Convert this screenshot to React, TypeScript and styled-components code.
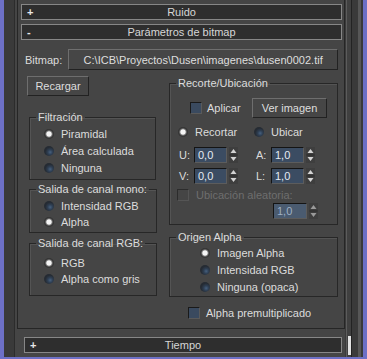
import styled, { createGlobalStyle } from "styled-components";

const GlobalStyle = createGlobalStyle`
  html, body {
    margin: 0;
    padding: 0;
    background: #6d70c6;
  }
  body {
    font-family: "Liberation Sans", Arial, sans-serif;
    font-size: 11px;
    color: #dcdcdc;
  }
`;

const Window = styled.div`
  width: 367px;
  height: 359px;
  box-sizing: border-box;
  padding: 0 4px 2px 4px;
  background: #6d70c6;
  display: flex;
`;

const Gutter = styled.div`
  width: 11px;
  background: #3a3a3a;
  border-right: 1px solid #2c2c2c;
  box-sizing: border-box;
`;

const Main = styled.div`
  width: 330px;
  background: #454545;
  padding-left: 2px;
  box-sizing: border-box;
  display: flex;
  flex-direction: column;
`;

const Frame = styled.div`
  height: 329px;
  box-sizing: border-box;
  border: 1px solid #262626;
  border-top: none;
  padding-top: 4px;
  display: flex;
  flex-direction: column;
`;

const RolloutHeader = styled.div<{ $top?: number }>`
  height: 16px;
  box-sizing: border-box;
  margin: ${(p) => p.$top ?? 0}px 2px 0 3px;
  background: #2e2e2e;
  border: 1px solid #878787;
  display: flex;
  align-items: center;
  color: #d6d6d6;
  font-size: 11px;
`;

const HeaderSign = styled.span`
  width: 18px;
  padding-left: 5px;
  box-sizing: border-box;
  font-weight: bold;
  color: #e8e8e8;
`;

const HeaderTitle = styled.span`
  flex: 1;
  text-align: center;
  padding-right: 18px;
`;

const Body = styled.div`
  flex: 1;
  padding: 9px 6px 0 7px;
  display: flex;
  flex-direction: column;
`;

const BitmapRow = styled.div`
  display: flex;
  align-items: center;
  gap: 6px;
`;

const Button = styled.div<{ $width?: number; $height?: number; $push?: boolean }>`
  width: ${(p) => (p.$width ? `${p.$width}px` : "auto")};
  flex: ${(p) => (p.$width ? "none" : 1)};
  height: ${(p) => p.$height ?? 20}px;
  margin-left: ${(p) => (p.$push ? "auto" : "0")};
  box-sizing: border-box;
  background: #464646;
  border-top: 1px solid #6e6e6e;
  border-left: 1px solid #6e6e6e;
  border-right: 1px solid #222;
  border-bottom: 1px solid #222;
  display: flex;
  align-items: center;
  justify-content: center;
  color: #dedede;
  white-space: nowrap;
`;

const Columns = styled.div`
  display: flex;
  margin-top: 6px;
  gap: 12px;
`;

const LeftColumn = styled.div`
  width: 130px;
  margin-left: 2px;
  display: flex;
  flex-direction: column;
`;

const RightColumn = styled.div`
  flex: 1;
  display: flex;
  flex-direction: column;
  padding-top: 1px;
`;

const Group = styled.fieldset<{
  $top?: number;
  $left?: number;
  $pt?: number;
  $pb?: number;
  $width?: number;
}>`
  margin: ${(p) => p.$top ?? 0}px 0 0 ${(p) => p.$left ?? 0}px;
  padding: ${(p) => p.$pt ?? 0}px 0 ${(p) => p.$pb ?? 0}px 0;
  width: ${(p) => (p.$width ? `${p.$width}px` : "auto")};
  box-sizing: border-box;
  border: 1px solid #272727;
  box-shadow: 1px 1px 0 #545454 inset;
  min-width: 0;
`;

const Legend = styled.legend`
  padding: 0 2px;
  margin-left: 6px;
  line-height: 13px;
  font-size: 11px;
  white-space: nowrap;
  color: #dcdcdc;
`;

const OptionList = styled.div<{ $indent: number }>`
  display: flex;
  flex-direction: column;
  padding-left: ${(p) => p.$indent}px;
`;

const Option = styled.div<{ $height?: number; $width?: number }>`
  height: ${(p) => p.$height ?? 17}px;
  width: ${(p) => (p.$width ? `${p.$width}px` : "auto")};
  display: flex;
  align-items: center;
  gap: 7px;
  white-space: nowrap;
`;

const Radio = styled.span<{ $on?: boolean }>`
  width: 10px;
  height: 10px;
  border-radius: 50%;
  flex: none;
  background: ${(p) =>
    p.$on
      ? "radial-gradient(circle, #f4f4f4 0 2.2px, #8a8a8a 3px, #3c3c3c 4px, #2f2f2f 5px)"
      : "radial-gradient(circle at 62% 62%, #46607e 0, #2e3e52 2.5px, #252b33 5px)"};
`;

const Check = styled.span<{ $disabled?: boolean }>`
  width: 12px;
  height: 12px;
  flex: none;
  box-sizing: border-box;
  background: ${(p) => (p.$disabled ? "#454545" : "#3a4a5f")};
  border-top: 1px solid ${(p) => (p.$disabled ? "#2c2c2c" : "#1a1a1a")};
  border-left: 1px solid ${(p) => (p.$disabled ? "#2c2c2c" : "#1a1a1a")};
  border-right: 1px solid ${(p) => (p.$disabled ? "#555" : "#5a5a5a")};
  border-bottom: 1px solid ${(p) => (p.$disabled ? "#555" : "#5a5a5a")};
`;

const CheckText = styled.span<{ $disabled?: boolean; $shift?: number }>`
  margin-left: ${(p) => p.$shift ?? 0}px;
  color: ${(p) => (p.$disabled ? "#6e6e6e" : "#dcdcdc")};
`;

const Row = styled.div<{
  $top?: number;
  $left?: number;
  $right?: number;
  $height?: number;
  $end?: boolean;
}>`
  display: flex;
  align-items: center;
  justify-content: ${(p) => (p.$end ? "flex-end" : "flex-start")};
  height: ${(p) => p.$height ?? 16}px;
  margin: ${(p) => p.$top ?? 0}px ${(p) => p.$right ?? 0}px 0 ${(p) => p.$left ?? 0}px;
  white-space: nowrap;
`;

const SpinBox = styled.div<{ $gap?: number }>`
  display: flex;
  align-items: center;
  margin-left: ${(p) => p.$gap ?? 0}px;
`;

const SpinLabel = styled.span`
  width: 15px;
`;

const SpinInput = styled.div<{ $disabled?: boolean; $width?: number }>`
  width: ${(p) => p.$width ?? 33}px;
  height: 16px;
  box-sizing: border-box;
  background: ${(p) => (p.$disabled ? "#4a5b70" : "#3b4c62")};
  border-top: 1px solid #141414;
  border-left: 1px solid #141414;
  border-right: 1px solid #5c5c5c;
  border-bottom: 1px solid #5c5c5c;
  padding-left: 3px;
  line-height: 14px;
  color: ${(p) => (p.$disabled ? "#9fb0c4" : "#e4ebf3")};
`;

const Arrows = styled.svg`
  margin-left: 2px;
  flex: none;
`;

function Spinner({ disabled }: { disabled?: boolean }) {
  const c = disabled ? "#9a9a9a" : "#d4d4d4";
  return (
    <Arrows width="9" height="16" viewBox="0 0 9 16">
      <rect x="0" y="0" width="9" height="16" fill="#3e3e3e" />
      <path d="M4.5 2 L7.5 6 L1.5 6 Z" fill={c} />
      <path d="M4.5 14 L7.5 10 L1.5 10 Z" fill={c} />
      <line x1="0.5" y1="8" x2="8.5" y2="8" stroke="#2a2a2a" />
    </Arrows>
  );
}

function SpinField({ label, value, gap }: { label: string; value: string; gap?: number }) {
  return (
    <SpinBox $gap={gap}>
      <SpinLabel>{label}</SpinLabel>
      <SpinInput>{value}</SpinInput>
      <Spinner />
    </SpinBox>
  );
}

const Footer = styled.div`
  padding-top: 8px;
  padding-right: 1px;
  padding-left: 4px;
`;

const Side = styled.div`
  flex: 1;
  display: flex;
  background: #3a3a3a;
`;

const Track = styled.div`
  width: 6px;
  margin-left: 1px;
  box-sizing: border-box;
  border-left: 1px solid #5c5c5c;
  border-right: 1px solid #232323;
  background: #404040;
  display: flex;
  flex-direction: column;
  justify-content: flex-end;
  padding-bottom: 2px;
`;

const Thumb = styled.div`
  height: 19px;
  margin-left: 1px;
  width: 3px;
  background: #e2e2e2;
`;

const SideEdge = styled.div`
  margin-left: auto;
  width: 3px;
  background: #575757;
  margin-right: 2px;
`;

export default function App() {
  return (
    <>
      <GlobalStyle />
      <Window>
        <Gutter />
        <Main>
          <Frame>
            <RolloutHeader>
              <HeaderSign>+</HeaderSign>
              <HeaderTitle>Ruido</HeaderTitle>
            </RolloutHeader>
            <RolloutHeader $top={4}>
              <HeaderSign>-</HeaderSign>
              <HeaderTitle>Parámetros de bitmap</HeaderTitle>
            </RolloutHeader>
            <Body>
              <BitmapRow>
                <span>Bitmap:</span>
                <Button $height={21}>C:\ICB\Proyectos\Dusen\imagenes\dusen0002.tif</Button>
              </BitmapRow>
              <Columns>
                <LeftColumn>
                  <Button $width={62}>Recargar</Button>
                  <Group $top={15} $left={2} $pt={1} $pb={3} $width={127}>
                    <Legend>Filtración</Legend>
                    <OptionList $indent={14}>
                      <Option>
                        <Radio $on />
                        Piramidal
                      </Option>
                      <Option>
                        <Radio />
                        Área calculada
                      </Option>
                      <Option>
                        <Radio />
                        Ninguna
                      </Option>
                    </OptionList>
                  </Group>
                  <Group $top={3} $left={2} $pt={2} $pb={2} $width={128}>
                    <Legend>Salida de canal mono:</Legend>
                    <OptionList $indent={14}>
                      <Option $height={16}>
                        <Radio />
                        Intensidad RGB
                      </Option>
                      <Option $height={16}>
                        <Radio $on />
                        Alpha
                      </Option>
                    </OptionList>
                  </Group>
                  <Group $top={4} $left={2} $pt={5} $pb={8} $width={128}>
                    <Legend>Salida de canal RGB:</Legend>
                    <OptionList $indent={14}>
                      <Option $height={16}>
                        <Radio $on />
                        RGB
                      </Option>
                      <Option $height={16}>
                        <Radio />
                        Alpha como gris
                      </Option>
                    </OptionList>
                  </Group>
                </LeftColumn>
                <RightColumn>
                  <Group $pt={8} $pb={5}>
                    <Legend>Recorte/Ubicación</Legend>
                    <Row $height={20} $left={20} $right={10}>
                      <Option $height={20}>
                        <Check />
                        <CheckText $shift={-2}>Aplicar</CheckText>
                      </Option>
                      <Button $width={75} $push>
                        Ver imagen
                      </Button>
                    </Row>
                    <Row $top={6} $left={8}>
                      <Option $height={16} $width={76}>
                        <Radio $on />
                        Recortar
                      </Option>
                      <Option $height={16}>
                        <Radio />
                        Ubicar
                      </Option>
                    </Row>
                    <Row $top={7} $left={9}>
                      <SpinField label="U:" value="0,0" />
                      <SpinField label="A:" value="1,0" gap={18} />
                    </Row>
                    <Row $top={5} $left={9}>
                      <SpinField label="V:" value="0,0" />
                      <SpinField label="L:" value="1,0" gap={18} />
                    </Row>
                    <Row $top={4} $left={7} $height={14}>
                      <Option $height={14}>
                        <Check $disabled />
                        <CheckText $disabled>Ubicación aleatoria:</CheckText>
                      </Option>
                    </Row>
                    <Row $top={1} $right={19} $end>
                      <SpinInput $disabled $width={34}>
                        1,0
                      </SpinInput>
                      <Spinner disabled />
                    </Row>
                  </Group>
                  <Group $top={6} $pb={1}>
                    <Legend>Origen Alpha</Legend>
                    <OptionList $indent={30}>
                      <Option>
                        <Radio $on />
                        Imagen Alpha
                      </Option>
                      <Option>
                        <Radio />
                        Intensidad RGB
                      </Option>
                      <Option>
                        <Radio />
                        Ninguna (opaca)
                      </Option>
                    </OptionList>
                  </Group>
                  <Row $top={9} $left={19} $height={13}>
                    <Option $height={13}>
                      <Check />
                      <CheckText $shift={-1}>Alpha premultiplicado</CheckText>
                    </Option>
                  </Row>
                </RightColumn>
              </Columns>
            </Body>
          </Frame>
          <Footer>
            <RolloutHeader>
              <HeaderSign>+</HeaderSign>
              <HeaderTitle>Tiempo</HeaderTitle>
            </RolloutHeader>
          </Footer>
        </Main>
        <Side>
          <Track>
            <Thumb />
          </Track>
          <SideEdge />
        </Side>
      </Window>
    </>
  );
}
